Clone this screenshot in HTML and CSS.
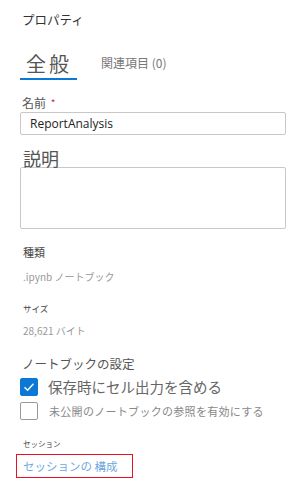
FILE: index.html
```html
<!DOCTYPE html>
<html lang="ja">
<head>
<meta charset="utf-8">
<title>プロパティ</title>
<link rel="stylesheet" href="styles.css">
</head>
<body>
<div class="panel">
  <div class="title">プロパティ</div>
  <div class="tabs">
    <div class="tab active">全般</div>
    <div class="tab">関連項目 (0)</div>
  </div>
  <div class="label name-label">名前 <span class="req">*</span></div>
  <div class="input">ReportAnalysis</div>
  <div class="desc-label">説明</div>
  <div class="textarea"></div>
  <div class="meta-label kind">種類</div>
  <div class="meta-value">.ipynb ノートブック</div>
  <div class="meta-label size">サイズ</div>
  <div class="meta-value">28,621 バイト</div>
  <div class="section">ノートブックの設定</div>
  <div class="check-row first">
    <span class="box checked"><svg width="12" height="10" viewBox="0 0 12 10"><path d="M1.5 5.2 L4.6 8.2 L10.5 1.8" fill="none" stroke="#fff" stroke-width="1.4"/></svg></span>
    <span class="check-text big">保存時にセル出力を含める</span>
  </div>
  <div class="check-row second">
    <span class="box"></span>
    <span class="check-text small">未公開のノートブックの参照を有効にする</span>
  </div>
  <div class="session-label">セッション</div>
  <div class="session-link"><span>セッションの 構成</span></div>
</div>
</body>
</html>
```

FILE: styles.css
```css
html, body {
  margin: 0;
  padding: 0;
  background: #fff;
}
body {
  font-family: "Noto Sans CJK JP", "Noto Sans", sans-serif;
  color: #333;
}
.panel {
  width: 306px;
  height: 482px;
  box-sizing: border-box;
  padding: 10px 20px 0 20px;
  overflow: hidden;
}
.title {
  font-size: 12.5px;
  line-height: 20px;
  color: #333;
  padding-left: 2px;
}
.tabs {
  display: flex;
  align-items: flex-end;
  margin-top: 21px;
}
.tab {
  font-size: 12px;
  line-height: 16px;
  color: #777;
  margin-left: 24px;
  padding-bottom: 9px;
}
.tab.active {
  margin-left: 0;
  font-size: 20px;
  line-height: 25px;
  color: #555;
  padding: 0 5px 2px 6px;
  letter-spacing: 3px;
  border-bottom: 2px solid #0a78d4;
}
.label {
  font-size: 12px;
  line-height: 16px;
  color: #555;
}
.name-label {
  margin-top: 15px;
  padding-left: 2px;
}
.req {
  color: #c4314b;
  font-size: 10px;
  margin-left: 2px;
  vertical-align: top;
}
.input {
  margin-top: 1px;
  height: 23px;
  box-sizing: border-box;
  border: 1px solid #c8c8c8;
  border-radius: 2px;
  padding-left: 9px;
  font-family: "Open Sans", "Noto Sans", sans-serif;
  font-size: 12px;
  line-height: 21px;
  color: #222;
}
.desc-label {
  margin-top: 14px;
  font-size: 18px;
  line-height: 18px;
  color: #555;
  padding-left: 3px;
}
.textarea {
  height: 62px;
  box-sizing: border-box;
  border: 1px solid #c8c8c8;
  border-radius: 2px;
}
.meta-label {
  font-size: 11px;
  line-height: 14px;
  color: #444;
  padding-left: 3px;
}
.meta-label.kind {
  margin-top: 16px;
}
.meta-label.size {
  margin-top: 17px;
  font-size: 8.5px;
}
.meta-value {
  margin-top: 11px;
  font-size: 10px;
  line-height: 14px;
  color: #999;
  padding-left: 3px;
}
.meta-label.size + .meta-value {
  margin-top: 9px;
}
.section {
  margin-top: 17px;
  font-size: 12.5px;
  line-height: 18px;
  color: #555;
  padding-left: 2px;
}
.check-row {
  display: flex;
  align-items: center;
  height: 19px;
}
.check-row.first {
  margin-top: 4px;
}
.check-row.second {
  margin-top: 5px;
}
.box {
  width: 18px;
  height: 18px;
  box-sizing: border-box;
  border: 1px solid #999;
  border-radius: 2px;
  display: flex;
  align-items: center;
  justify-content: center;
  flex: none;
}
.box.checked {
  background: #0a78d4;
  border-color: #0a78d4;
}
.check-text {
  margin-left: 10px;
  white-space: nowrap;
}
.check-text.big {
  font-size: 14.5px;
  color: #666;
}
.check-text.small {
  font-size: 11px;
  color: #888;
  letter-spacing: 0.3px;
  margin-left: 11px;
}
.session-label {
  margin-top: 18px;
  font-size: 7.5px;
  line-height: 12px;
  color: #444;
  padding-left: 3px;
}
.session-link {
  margin-top: 4px;
  margin-left: -4px;
  width: 117px;
  height: 24px;
  box-sizing: border-box;
  border: 1.5px solid #e81123;
  display: flex;
  align-items: center;
  padding-left: 6px;
}
.session-link span {
  font-size: 11.5px;
  color: #6fa8e0;
  white-space: nowrap;
}
```
